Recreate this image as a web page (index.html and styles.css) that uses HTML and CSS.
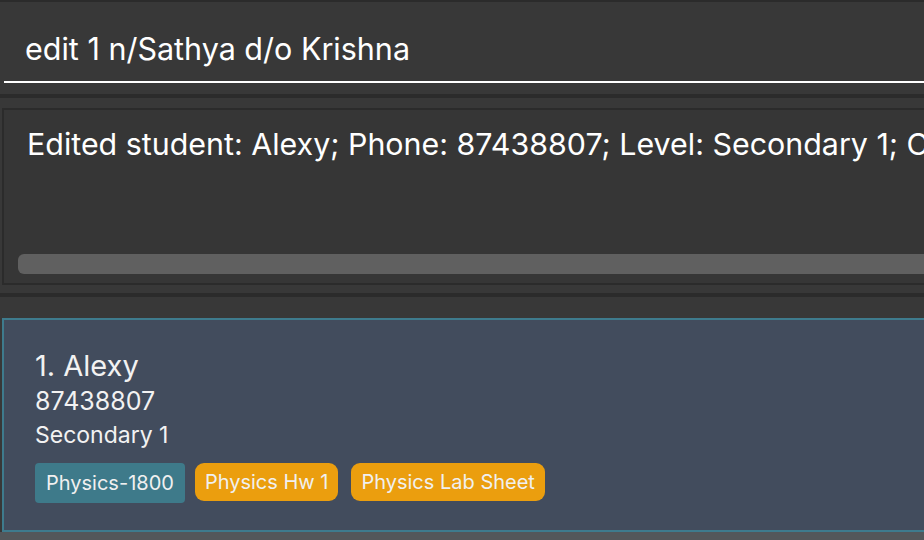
FILE: index.html
```html
<!DOCTYPE html>
<html>
<head>
<meta charset="utf-8">
<link rel="stylesheet" href="styles.css">
</head>
<body>
<div class="app">
  <div class="strip"></div>
  <div class="command">
    <div class="command-input">edit 1 n/Sathya d/o Krishna</div>
  </div>
  <div class="sep"></div>
  <div class="result-pane">
    <div class="result-box">
      <div class="result-text">Edited student: Alexy; Phone: 87438807; Level: Secondary 1; Classes: Physics-1800; Tasks: Physics Hw 1, Physics Lab Sheet</div>
      <div class="scrollbar"></div>
    </div>
  </div>
  <div class="sep"></div>
  <div class="list-pane">
    <div class="card">
      <div class="name">1. Alexy</div>
      <div class="detail phone">87438807</div>
      <div class="detail">Secondary 1</div>
      <div class="tags">
        <span class="tag tag-class">Physics-1800</span>
        <span class="tag tag-task">Physics Hw 1</span>
        <span class="tag tag-task">Physics Lab Sheet</span>
      </div>
    </div>
  </div>
  <div class="footer"></div>
</div>
</body>
</html>
```
FILE: styles.css
```css
* { box-sizing: border-box; }
html, body { margin: 0; padding: 0; }
body {
  background: #383838;
  font-family: Inter, "Open Sans", sans-serif;
  color: #f2f2f2;
  width: 924px;
  height: 540px;
  overflow: hidden;
}
.app { display: flex; flex-direction: column; height: 540px; }
.strip { height: 2px; background: #2b2b2b; flex: none; }
.command { height: 92px; background: #383838; padding: 0 0 0 4px; flex: none; }
.command-input {
  height: 81px;
  border-bottom: 2px solid #ffffff;
  font-size: 30.5px;
  padding: 29px 0 0 21px;
  line-height: 36px;
  color: #ffffff;
  white-space: nowrap;
}
.sep { height: 4px; background: #2b2b2b; flex: none; }
.result-pane { padding: 10px 0 8px 2px; flex: none; }
.result-box {
  height: 177px;
  border: 2px solid #2b2b2b;
  border-right: none;
  background: #363636;
  padding: 15px 0 0 23px;
  overflow: hidden;
  position: relative;
}
.result-text {
  font-size: 30.4px;
  line-height: 38px;
  white-space: nowrap;
  color: #ffffff;
}
.scrollbar {
  position: absolute;
  left: 14px;
  right: -8px;
  top: 144px;
  height: 20px;
  background: #606060;
  border-radius: 6px;
}
.list-pane { padding: 21px 0 0 2px; flex: none; }
.card {
  height: 214px;
  background: #424c5d;
  border: 2px solid #3e7b8d;
  border-right: none;
  padding: 28px 0 0 31px;
}
.name { font-size: 29px; line-height: 36px; }
.detail { font-size: 23px; line-height: 34px; }
.phone { font-size: 25px; }
.tags { display: flex; gap: 10px; margin-top: 11px; }
.tag {
  font-size: 20px;
  line-height: 40px;
  height: 40px;
  padding: 0 11px;
  border-radius: 4px;
  color: #f0f0f0;
}
.tag-class { background: #3e7a8a; }
.tag-task { background: #eb9e0e; border-radius: 9px; height: 38px; line-height: 38px; padding: 0 10px; }
.tag-task + .tag-task { margin-left: 3px; }
.footer { flex: 1; background: #53575a; }
```
